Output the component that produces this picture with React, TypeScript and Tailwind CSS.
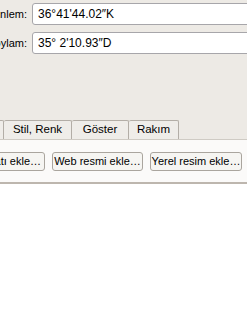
export default function App() {
  const font = { fontFamily: '"Liberation Sans", Arial, sans-serif' };
  return (
    <div
      className="w-[247px] h-[315px] overflow-hidden bg-[#edeae5] text-[11px] text-black flex flex-col"
      style={font}
    >
      {/* coordinate rows */}
      <div className="pt-[3px] flex flex-col gap-[7px]">
        <div className="flex items-center h-[22px]">
          <div className="w-[32px] shrink-0 flex justify-end overflow-hidden pr-[5px] whitespace-nowrap">
            Enlem:
          </div>
          <div className="flex-1 -mr-[20px] h-[22px] rounded-[3px] border border-[#a7a6aa] bg-white flex items-center pl-[5px] text-[12px]">
            36°41'44.02″K
          </div>
        </div>
        <div className="flex items-center h-[22px]">
          <div className="w-[32px] shrink-0 flex justify-end overflow-hidden pr-[5px] whitespace-nowrap">
            Boylam:
          </div>
          <div className="flex-1 -mr-[20px] h-[22px] rounded-[3px] border border-[#a7a6aa] bg-white flex items-center pl-[5px] text-[12px]">
            35° 2'10.93″D
          </div>
        </div>
      </div>

      {/* tabs */}
      <div className="mt-[66px] h-[20px] flex items-end border-b border-[#cfcbc4] text-[11.5px]">
        <div className="w-[4px] h-[19px] border-r border-t border-[#b3aea7] bg-[#efede9] rounded-tr-[2px]" />
        <div className="w-[68px] h-[19px] border-r border-t border-[#b3aea7] bg-[#efede9] rounded-t-[2px] flex items-center justify-center">
          Stil, Renk
        </div>
        <div className="w-[57px] h-[19px] border-r border-t border-[#b3aea7] bg-[#efede9] rounded-t-[2px] flex items-center justify-center">
          Göster
        </div>
        <div className="w-[50px] h-[19px] border-r border-t border-[#b3aea7] bg-[#efede9] rounded-t-[2px] flex items-center justify-center">
          Rakım
        </div>
      </div>

      {/* panel */}
      <div className="bg-[#fbfaf9] h-[42px] pt-[12px] flex gap-[7px] text-[11px]">
        <div className="-ml-[16px] w-[61px] h-[19px] shrink-0 rounded-[3px] border border-[#aaa59e] bg-[#f6f5f2] flex items-center justify-end pr-[3px] whitespace-nowrap">
          atı ekle…
        </div>
        <div className="w-[91px] h-[19px] shrink-0 rounded-[3px] border border-[#aaa59e] bg-[#f6f5f2] flex items-center justify-center whitespace-nowrap">
          Web resmi ekle…
        </div>
        <div className="w-[92px] h-[19px] shrink-0 rounded-[3px] border border-[#aaa59e] bg-[#f6f5f2] flex items-center justify-center whitespace-nowrap">
          Yerel resim ekle…
        </div>
      </div>
      <div className="h-[2px] bg-[#bdb6ae]" />
      <div className="flex-1 bg-white" />
    </div>
  );
}
